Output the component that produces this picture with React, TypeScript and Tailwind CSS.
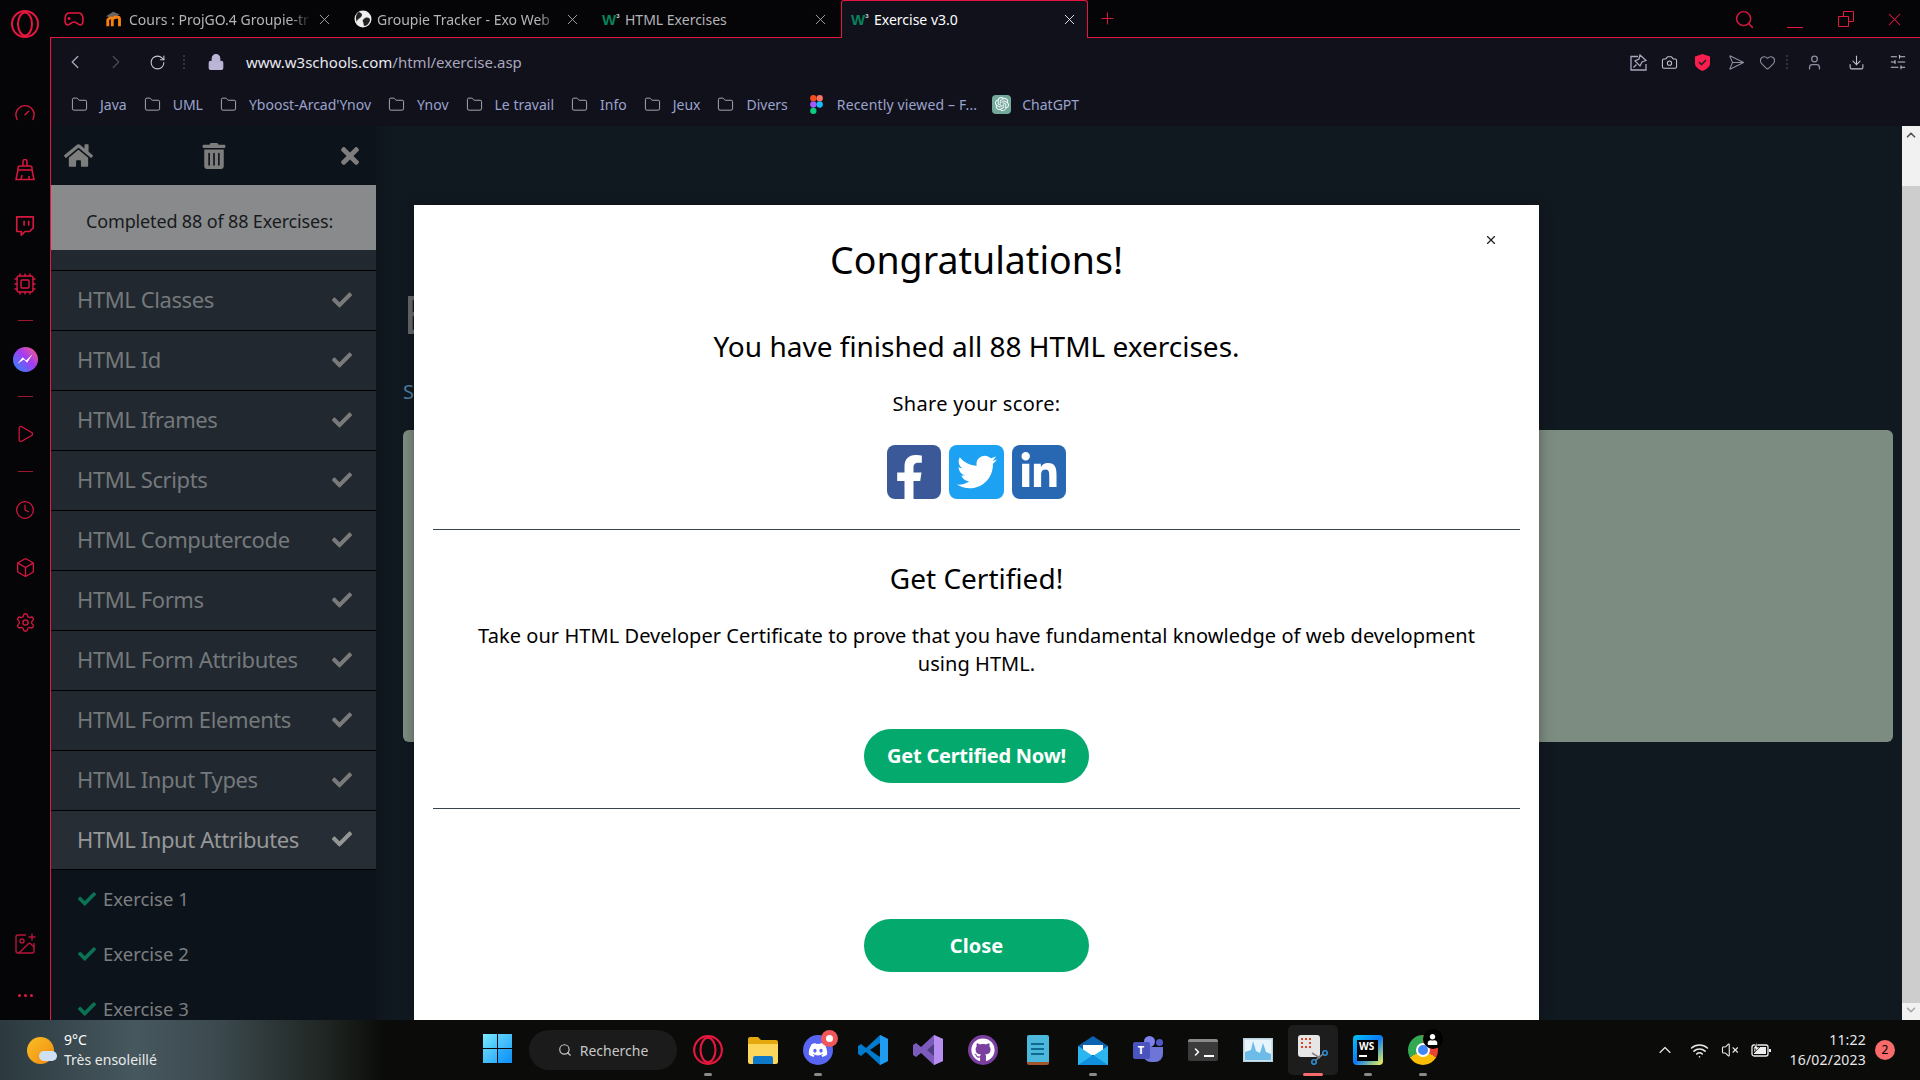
import React from 'react';
import {
  Gauge, Twitch, Cpu, Play, Clock, Box, Settings, ChevronLeft, ChevronRight, RotateCw, Lock,
  Folder, Search, X, Plus, Camera, Send, Heart, User, Download, SlidersHorizontal, Wifi, VolumeX,
  ChevronUp, ChevronDown, ImagePlus,
} from 'lucide-react';
import {
  FaHome, FaTrashAlt, FaTimes, FaCheck, FaFacebookF, FaTwitter, FaLinkedinIn, FaDiscord, FaGithub, FaUser,
} from 'react-icons/fa';
import { SiOpenai } from 'react-icons/si';

const RED = '#e5173f';

const topics = [
  'HTML Classes', 'HTML Id', 'HTML Iframes', 'HTML Scripts', 'HTML Computercode',
  'HTML Forms', 'HTML Form Attributes', 'HTML Form Elements', 'HTML Input Types',
];

const bookmarks = ['Java', 'UML', "Yboost-Arcad'Ynov", 'Ynov', 'Le travail', 'Info', 'Jeux', 'Divers'];

const OperaLogo = ({ size = 30 }: { size?: number }) => (
  <svg width={size} height={size} viewBox="0 0 30 30" fill="none" stroke="#e5173f" strokeWidth="2">
    <circle cx="15" cy="15" r="13" />
    <ellipse cx="15" cy="15" rx="7" ry="11.5" />
  </svg>
);

const W3 = () => (
  <span className="w-[18px] flex items-start font-['Liberation_Sans',sans-serif] font-bold text-[15px] leading-none text-[#07835a]">
    W<span className="text-[6px] leading-[8px] text-[#d8d8d8]">3</span>
  </span>
);

const Moodle = () => (
  <svg width="20" height="16" viewBox="0 0 20 16">
    <path d="M0 5 L8 0 L15 3 L7 7 Z" fill="#666" />
    <path d="M2 16V9c2-3 5-3 5 0v7M7 16V8c3-3 8-3 8 0v8" fill="none" stroke="#f98012" strokeWidth="3.2" />
  </svg>
);

const Globe = () => (
  <svg width="18" height="18" viewBox="0 0 18 18">
    <circle cx="9" cy="9" r="8.5" fill="#eee" />
    <path d="M5 2c3 1 4 3 2 5S3 9 3 12C1 8 2 4 5 2ZM11 8c3-1 5 0 5 2s-3 6-5 6-1-3-2-4 0-3 2-4Z" fill="#222" />
  </svg>
);

const Tab = ({ title, icon, active, fade }: { title: string; icon: React.ReactNode; active?: boolean; fade?: boolean }) => (
  <div
    className={
      active
        ? 'w-[247px] h-[39px] -mb-px flex items-center pl-[9px] pb-[2px] bg-[#11111b] border-x border-t border-[#e5173f] rounded-t-[3px] text-white'
        : 'w-[248px] h-[38px] flex items-center pl-[9px] text-[#b4b4b8]'
    }
  >
    <span className="w-[18px] flex justify-center shrink-0">{icon}</span>
    <span
      className={`ml-[5px] w-[183px] shrink-0 overflow-hidden whitespace-nowrap text-[14px] ${
        fade ? '[mask-image:linear-gradient(to_right,black_88%,transparent)]' : ''
      }`}
    >
      {title}
    </span>
    <X size={17} strokeWidth={1.2} className="ml-[4px] shrink-0" />
  </div>
);

const Rail = () => (
  <div className="w-[50px] shrink-0 bg-[#050508] flex flex-col items-center text-[#d8173f]">
    <div className="mt-[9px]"><OperaLogo /></div>
    <Gauge size={22} strokeWidth={1.5} className="mt-[63px]" />
    <svg className="mt-[35px]" width="22" height="22" viewBox="0 0 22 22" fill="none" stroke="currentColor" strokeWidth="1.5">
      <path d="M9 7V2.5a2 2 0 0 1 4 0V7" />
      <path d="M4 11V9a2 2 0 0 1 2-2h10a2 2 0 0 1 2 2v2Z" />
      <path d="M4 11 L2 20.5 H20 L18 11 M7 20.5 L8 16 M15 20.5 V17" />
    </svg>
    <Twitch size={22} strokeWidth={1.8} className="mt-[34px]" />
    <Cpu size={24} strokeWidth={1.4} className="mt-[35px]" />
    <div className="w-[15px] h-px bg-[#a01630] mt-[24px]" />
    <div className="mt-[26px] w-[25px] h-[25px] rounded-full bg-[linear-gradient(45deg,#1e90ff,#a33bf0_55%,#ff5f7e)] flex items-center justify-center">
      <svg width="17" height="11" viewBox="0 0 15 10"><path d="M0 9 L5 3 L8 6 L14 0 L9 8 L6 5 Z" fill="#fff" /></svg>
    </div>
    <div className="w-[15px] h-px bg-[#a01630] mt-[24px]" />
    <Play size={20} strokeWidth={1.5} className="mt-[27px]" />
    <div className="w-[15px] h-px bg-[#a01630] mt-[27px]" />
    <Clock size={20} strokeWidth={1.5} className="mt-[28px]" />
    <Box size={21} strokeWidth={1.5} className="mt-[37px]" />
    <Settings size={21} strokeWidth={1.5} className="mt-[34px]" />
    <ImagePlus size={24} strokeWidth={1.4} className="mt-[299px] text-[#b8143a]" />
    <div className="mt-[38px] flex gap-[3px]">
      <span className="w-[3px] h-[3px] rounded-full bg-[#e5173f]" />
      <span className="w-[3px] h-[3px] rounded-full bg-[#e5173f]" />
      <span className="w-[3px] h-[3px] rounded-full bg-[#e5173f]" />
    </div>
  </div>
);

const Toolbar = () => (
  <div className="h-[48px] shrink-0 flex items-center bg-[#11111b] text-[#a9a6bd] relative">
    <ChevronLeft size={22} strokeWidth={1.4} className="ml-[13px]" />
    <ChevronRight size={22} strokeWidth={1.4} className="ml-[19px] text-[#4a4a58]" />
    <RotateCw size={17} strokeWidth={1.5} className="ml-[22px] text-[#c9c7d6]" />
    <div className="ml-[17px] w-[2px] h-[14px] border-l-2 border-dotted border-[#33333f]" />
    <Lock size={18} fill="#bcb6d6" strokeWidth={1.6} className="ml-[22px] text-[#bcb6d6]" />
    <div className="ml-[21px] text-[15px] text-[#a9a6bd]">
      <span className="text-[#e8e8f0]">www.w3schools.com</span>/html/exercise.asp
    </div>
    <div className="ml-auto flex items-center text-[#8f8d9f]">
      <svg width="17" height="17" viewBox="0 0 17 17" fill="none" stroke="#a9a6bd" strokeWidth="1.3">
        <path d="M8 2.5H1v13.5h15v-6" />
        <path d="M10 1 L16 6.5 L12 8 L10 12 L5 7 L9 5 Z M6.5 10.5 L3.5 13.5" />
      </svg>
      <Camera size={17} strokeWidth={1.5} className="ml-[14px] text-[#c3c1d0]" />
      <svg className="ml-[17px]" width="15" height="17" viewBox="0 0 15 17">
        <path d="M7.5 0 L15 2.5 V10 C15 13 10 16 7.5 17 C5 16 0 13 0 10 V2.5 Z" fill="#fa1e4e" />
        <path d="M4 8 L6.5 10.5 L11 6" fill="none" stroke="#222" strokeWidth="1.6" />
      </svg>
      <Send size={17} strokeWidth={1.5} className="ml-[15px] rotate-45" />
      <Heart size={17} strokeWidth={1.5} className="ml-[17px]" />
      <div className="ml-[10px] w-[2px] h-[14px] border-l-2 border-dotted border-[#33333f]" />
      <User size={17} strokeWidth={1.8} className="ml-[18px]" />
      <Download size={17} strokeWidth={1.5} className="ml-[25px] text-[#c3c1d0]" />
      <SlidersHorizontal size={18} strokeWidth={1.4} className="ml-[24px] mr-[13px] text-[#c3c1d0]" />
    </div>
  </div>
);

const BookmarksBar = () => (
  <div className="h-[40px] shrink-0 flex items-center gap-[17px] pl-[20px] pb-[4px] bg-[#11111b] text-[14px] text-[#9aa3cd]">
    {bookmarks.map((name) => (
      <div key={name} className="flex items-center gap-[12px]">
        <Folder size={17} strokeWidth={1.1} className="text-[#d0d0d8]" />
        <span>{name}</span>
      </div>
    ))}
    <div className="flex items-center gap-[14px] ml-[5px]">
      <svg width="13" height="19" viewBox="0 0 12 18">
        <rect x="0" y="0" width="6" height="6" rx="3" fill="#f24e1e" />
        <rect x="6" y="0" width="6" height="6" rx="3" fill="#ff7262" />
        <rect x="0" y="6" width="6" height="6" rx="3" fill="#a259ff" />
        <circle cx="9" cy="9" r="3" fill="#1abcfe" />
        <rect x="0" y="12" width="6" height="6" rx="3" fill="#0acf83" />
      </svg>
      <span className="tracking-[0.15px]">Recently viewed – F...</span>
    </div>
    <div className="flex items-center gap-[11px] ml-[-2px]">
      <span className="w-[19px] h-[19px] rounded-[4px] bg-[#74aa9c] flex items-center justify-center">
        <SiOpenai size={14} className="text-white" />
      </span>
      <span>ChatGPT</span>
    </div>
  </div>
);

const LessonPanel = () => (
  <div className="w-[325px] shrink-0 bg-[#0d131a] overflow-hidden shadow-[4px_0_10px_rgba(0,0,0,0.25)]">
    <div className="h-[59px] flex items-center justify-between pl-[13px] pr-[14px] text-[#7d7d7d]">
      <FaHome size={29} />
      <FaTrashAlt size={26} className="mr-[3px]" />
      <FaTimes size={26} className="mr-[-1px]" />
    </div>
    <div className="h-[65px] bg-[#888a8c] flex items-center pl-[35px] pt-[7px] text-[18px] tracking-[-0.15px] text-[#181a1d]">
      Completed 88 of 88 Exercises:
    </div>
    <div className="h-[20px] bg-[#22282f]" />
    {topics.map((topic) => (
      <div key={topic} className="h-[60px] bg-[#22282f] border-t border-black flex items-center justify-between pl-[26px] pr-[24px] text-[22px] tracking-[-0.4px] text-[#74797c]">
        <span className="pb-[2px]">{topic}</span>
        <FaCheck size={20} className="text-[#7a7a7a] mb-[2px]" />
      </div>
    ))}
    <div className="h-[60px] bg-[#272d34] border-y border-black flex items-center justify-between pl-[26px] pr-[24px] text-[22px] tracking-[-0.4px] text-[#969899]">
      <span className="pb-[2px]">HTML Input Attributes</span>
      <FaCheck size={20} className="text-[#969696] mb-[2px]" />
    </div>
    <div className="pt-[1px]">
      {['Exercise 1', 'Exercise 2', 'Exercise 3'].map((name) => (
        <div key={name} className="h-[55px] flex items-center pl-[27px] text-[18.5px] text-[#7c7f81]">
          <FaCheck size={18} className="text-[#0a7353]" />
          <span className="ml-[7px]">{name}</span>
        </div>
      ))}
    </div>
  </div>
);

const Modal = () => (
  <div className="absolute left-[363px] top-[79px] bottom-0 w-[1125px] bg-white px-[19px] flex flex-col items-center text-center text-black shadow-[0_0_12px_rgba(0,0,0,0.35)]">
    <X size={14} strokeWidth={2} className="absolute right-[41px] top-[28px] text-[#222]" />
    <h2 className="mt-[25px] text-[37.5px] leading-[60px]">Congratulations!</h2>
    <p className="mt-[35px] text-[28px] leading-[42px]">You have finished all 88 HTML exercises.</p>
    <p className="mt-[22px] text-[20px] leading-[30px] tracking-[0.3px]">Share your score:</p>
    <div className="mt-[26px] flex gap-[8px]">
      <div className="w-[54px] h-[54px] rounded-[8px] bg-[#3b5998] flex items-end justify-end pr-[9px] overflow-hidden">
        <FaFacebookF size={46} className="text-white mb-[-2px]" />
      </div>
      <div className="w-[55px] h-[54px] rounded-[8px] bg-[#1da1f2] flex items-center justify-center">
        <FaTwitter size={40} className="text-white" />
      </div>
      <div className="w-[54px] h-[54px] rounded-[8px] bg-[#2867b2] flex items-center justify-center">
        <FaLinkedinIn size={40} className="text-white" />
      </div>
    </div>
    <div className="mt-[30px] w-full h-px bg-[#3a444c]" />
    <h3 className="mt-[26px] text-[28px] leading-[44px]">Get Certified!</h3>
    <p className="mt-[22px] w-[1020px] text-[20px] leading-[28px] tracking-[0.06px]">
      Take our HTML Developer Certificate to prove that you have fundamental knowledge of web development using HTML.
    </p>
    <button className="mt-[51px] w-[225px] h-[54px] rounded-[27px] bg-[#04aa6d] text-white text-[20px] tracking-[-0.25px] font-bold">
      Get Certified Now!
    </button>
    <div className="mt-[25px] w-full h-px bg-[#3a444c]" />
    <button className="mt-[110px] w-[225px] h-[53px] rounded-[27px] bg-[#04aa6d] text-white text-[20px] font-bold">
      Close
    </button>
  </div>
);

const Page = () => (
  <div className="flex-1 min-h-0 flex relative bg-[#111920] overflow-hidden">
    <LessonPanel />
    <div className="flex-1 min-w-0 pl-[27px] pr-[9px]">
      <h1 className="mt-[158px] text-[52px] leading-[60px] text-[#666a6d]">Exercise</h1>
      <p className="mt-[36px] text-[20px] leading-[24px] text-[#4f7ea3]">Score</p>
      <div className="mt-[26px] h-[312px] rounded-[6px] bg-[#7d8c80]" />
    </div>
    <div className="w-[18px] shrink-0 bg-[#cdcdcd] flex flex-col justify-between">
      <div className="h-[60px] bg-[#f1f1f1] flex justify-center pt-[2px]"><ChevronUp size={14} strokeWidth={3} className="text-[#555]" /></div>
      <div className="h-[17px] bg-[#f1f1f1] flex justify-center"><ChevronDown size={14} strokeWidth={3} className="text-[#aaa]" /></div>
    </div>
    <Modal />
  </div>
);

const TaskIcon = ({ children, mark, active }: { children: React.ReactNode; mark?: boolean; active?: boolean }) => (
  <div className={`w-[50px] h-[50px] mx-[2.5px] flex flex-col items-center justify-center relative rounded-[5px] ${active ? 'bg-[#1c1d1c]' : ''}`}>
    {children}
    {mark && <span className="absolute bottom-[-1px] w-[8px] h-[3px] rounded-full bg-[#8a8a8a]" />}
    {active && <span className="absolute bottom-[-1px] w-[20px] h-[3px] rounded-full bg-[#f76b6b]" />}
  </div>
);

const Taskbar = () => (
  <div className="h-[60px] shrink-0 flex items-center relative bg-[linear-gradient(90deg,#2c3a3f_0%,#46575e_7%,#3d4b50_11%,#1f2522_17%,#0b0c0a_20%)]">
    <div className="w-[27px] h-[27px] ml-[27px] rounded-full bg-[linear-gradient(135deg,#fbbf24,#f08a12)] shrink-0 relative">
      <span className="absolute right-[-3px] bottom-[3px] w-[18px] h-[10px] rounded-full bg-[#cfe0f5]" />
    </div>
    <div className="ml-[10px] text-[14px] leading-[20px] text-[#e8eaea] w-[200px]">
      <div className="text-white">9°C</div>
      <div>Très ensoleillé</div>
    </div>
    <div className="absolute left-[483px] top-[14px] w-[29px] h-[29px] grid grid-cols-2 gap-[1px]">
      <span className="bg-[linear-gradient(135deg,#7fe9ff,#3fc3fb)]" />
      <span className="bg-[linear-gradient(135deg,#5fd0fd,#2fb0fb)]" />
      <span className="bg-[linear-gradient(135deg,#5fd0fd,#2fb0fb)]" />
      <span className="bg-[linear-gradient(135deg,#2fb0fb,#0f90f8)]" />
    </div>
    <div className="absolute left-[529px] top-[10px] w-[148px] h-[40px] rounded-full bg-[#1a1b1a] flex items-center justify-center gap-[8px] text-[14px] text-[#c8c8c8]">
      <Search size={14} strokeWidth={2} />
      <span>Recherche</span>
    </div>
    <div className="absolute left-[680px] top-[5px] flex">
      <TaskIcon mark><OperaLogo size={32} /></TaskIcon>
      <TaskIcon>
        <svg width="30" height="28" viewBox="0 0 30 28">
          <path d="M0 3a2 2 0 0 1 2-2h8l3 3h15a2 2 0 0 1 2 2v20H0Z" fill="#e3a90e" />
          <path d="M0 8h30v18a2 2 0 0 1-2 2H2a2 2 0 0 1-2-2Z" fill="#fdd75c" />
          <path d="M5 28v-6a2 2 0 0 1 2-2h16a2 2 0 0 1 2 2v6Z" fill="#0f78c8" />
        </svg>
      </TaskIcon>
      <TaskIcon mark>
        <div className="w-[30px] h-[30px] rounded-full bg-[#5865f2] flex items-center justify-center relative">
          <FaDiscord size={20} className="text-white" />
          <span className="absolute right-[-5px] top-[-5px] w-[17px] h-[17px] rounded-full bg-[#f0575a] flex items-center justify-center">
            <span className="w-[7px] h-[7px] rounded-full bg-white" />
          </span>
        </div>
      </TaskIcon>
      <TaskIcon>
        <svg width="30" height="30" viewBox="0 0 30 30">
          <path d="M22 0 L30 4 V26 L22 30 L8 17 L3 21 L0 19 V11 L3 9 L8 13 Z" fill="#007acc" />
          <path d="M22 0 L30 4 V26 L22 30 Z" fill="#1f9cf0" />
          <path d="M22 8 L12 15 L22 22 Z" fill="#0b0c0a" />
        </svg>
      </TaskIcon>
      <TaskIcon>
        <svg width="30" height="30" viewBox="0 0 30 30">
          <path d="M21 0 L30 4 V26 L21 30 L8 18 L3 22 L0 20 V10 L3 8 L8 12 Z" fill="#7c5bbd" />
          <path d="M21 0 L30 4 V26 L21 30 Z" fill="#b88ef0" />
          <path d="M21 9 L14 15 L21 21 Z" fill="#4e3d80" />
        </svg>
      </TaskIcon>
      <TaskIcon>
        <div className="w-[30px] h-[30px] rounded-full bg-[#7b3fa0] flex items-center justify-center">
          <FaGithub size={24} className="text-white" />
        </div>
      </TaskIcon>
      <TaskIcon>
        <div className="w-[22px] h-[30px] bg-[#4cb8dc] rounded-[2px] border-b-[3px] border-[#a4562a] flex flex-col items-center justify-center gap-[3px]">
          <span className="w-[13px] h-[2px] bg-[#0f6a92]" />
          <span className="w-[13px] h-[2px] bg-[#0f6a92]" />
          <span className="w-[13px] h-[2px] bg-[#0f6a92]" />
        </div>
      </TaskIcon>
      <TaskIcon mark>
        <svg width="30" height="29" viewBox="0 0 30 29">
          <path d="M0 10 L15 0 L30 10 V14 H0 Z" fill="#0a62b0" />
          <path d="M5 9h20v10H5Z" fill="#fff" />
          <path d="M0 10 L15 20 L30 10 V29 H0 Z" fill="#2bb6f0" />
          <path d="M0 29 L15 19 L30 29 Z" fill="#0f8fdc" />
        </svg>
      </TaskIcon>
      <TaskIcon>
        <div className="relative w-[30px] h-[28px]">
          <span className="absolute left-[11px] top-[0px] w-[11px] h-[11px] rounded-full bg-[#7b83eb]" />
          <span className="absolute right-[0px] top-[3px] w-[7px] h-[7px] rounded-full bg-[#5059c9]" />
          <span className="absolute left-[10px] top-[11px] w-[20px] h-[15px] rounded-b-[8px] bg-[#6d75d6]" />
          <span className="absolute left-0 top-[6px] w-[17px] h-[17px] rounded-[2px] bg-[#4b53bc] flex items-center justify-center text-white text-[11px] font-bold">T</span>
        </div>
      </TaskIcon>
      <TaskIcon>
        <div className="w-[30px] h-[22px] rounded-[2px] bg-[#3b3b3b] border-t-[3px] border-[#8a8a8a] flex items-center pl-[3px] gap-[1px]">
          <ChevronRight size={12} strokeWidth={3} className="text-white" />
          <span className="w-[10px] h-[2px] mt-[8px] bg-white" />
        </div>
      </TaskIcon>
      <TaskIcon>
        <svg width="30" height="24" viewBox="0 0 30 24">
          <rect width="30" height="24" fill="#b8d2de" />
          <rect x="1.5" y="1.5" width="27" height="21" fill="#e8f4fb" />
          <path d="M2 22 V14 L8 12 L10 3 L13 13 L17 15 L20 5 L23 14 L28 16 V22 Z" fill="#6cbbe8" />
        </svg>
      </TaskIcon>
      <TaskIcon active>
        <div className="relative w-[30px] h-[30px]">
          <div className="w-[22px] h-[22px] rounded-[3px] bg-[#e6e6e6] flex items-start p-[3px]">
            <span className="w-[10px] h-[10px] border-2 border-dotted border-[#d9482b]" />
          </div>
          <svg className="absolute left-[13px] top-[13px]" width="17" height="17" viewBox="0 0 17 17" fill="none" stroke="#2a8fd8" strokeWidth="1.6">
            <circle cx="14" cy="5" r="2.2" />
            <circle cx="3" cy="14" r="2.2" />
            <path d="M12 6 L5 12 M1 5 L9 10" stroke="#888" />
          </svg>
        </div>
      </TaskIcon>
      <TaskIcon mark>
        <div className="w-[30px] h-[30px] rounded-[4px] bg-[linear-gradient(135deg,#07c3f2,#087cfa_50%,#fcf84a)] flex items-center justify-center">
          <div className="w-[21px] h-[21px] bg-black text-white text-[10px] font-bold leading-[12px] pl-[2px]">
            WS
            <div className="w-[8px] h-[2px] mt-[3px] bg-white" />
          </div>
        </div>
      </TaskIcon>
      <TaskIcon mark>
        <div className="relative w-[30px] h-[30px] rounded-full bg-[conic-gradient(#ea4335_0deg_120deg,#fbbc05_120deg_240deg,#34a853_240deg_360deg)] flex items-center justify-center">
          <span className="w-[14px] h-[14px] rounded-full bg-[#4285f4] border-2 border-white" />
          <span className="absolute right-[-5px] top-[-6px] w-[20px] h-[20px] rounded-full bg-black flex items-center justify-center">
            <FaUser size={11} className="text-white" />
          </span>
        </div>
      </TaskIcon>
    </div>
    <div className="ml-auto flex items-center text-[#e8e8e8]">
      <ChevronUp size={20} strokeWidth={1.4} />
      <Wifi size={19} strokeWidth={2} className="ml-[15px]" />
      <VolumeX size={18} strokeWidth={1.5} className="ml-[12px]" />
      <svg className="ml-[12px]" width="20" height="16" viewBox="0 0 20 16">
        <rect x="1" y="3" width="16" height="11" rx="2" fill="none" stroke="#eee" strokeWidth="1.3" />
        <rect x="3" y="5" width="12" height="7" fill="#eee" />
        <rect x="18" y="7" width="2" height="3" fill="#eee" />
        <path d="M6 0 L2 7 H5 L3 11 L9 5 H6 Z" fill="#eee" stroke="#0b0c0a" strokeWidth="0.7" />
      </svg>
      <div className="ml-[10px] text-right text-[14px] leading-[20px] tracking-[0.2px] w-[85px]">
        <div>11:22</div>
        <div>16/02/2023</div>
      </div>
      <span className="ml-[9px] mr-[25px] w-[20px] h-[20px] rounded-full bg-[#f76b6b] flex items-center justify-center text-[12px] text-black">2</span>
    </div>
  </div>
);

export default function App() {
  return (
    <div className="w-[1920px] h-[1080px] overflow-hidden flex flex-col font-['Noto_Sans',sans-serif]">
      <div className="flex-1 min-h-0 flex">
        <Rail />
        <div className="flex-1 min-w-0 flex flex-col">
          <div className="h-[38px] shrink-0 flex items-start bg-[#050508] border-b border-[#e5173f] relative">
            <div className="w-[47px] h-[38px] flex items-center justify-center">
              <svg width="20" height="16" viewBox="0 0 20 16" fill="none" stroke={RED} strokeWidth="1.6">
                <path d="M5 2h10c3 0 4 3 4 7s-1 5-3 5-3-3-6-3-4 3-6 3-3-1-3-5 1-7 4-7Z" />
                <path d="M5 6v3M3.5 7.5h3M14 7h.1M16 8h.1" />
              </svg>
            </div>
            <Tab title="Cours : ProjGO.4 Groupie-tr" icon={<Moodle />} fade />
            <Tab title="Groupie Tracker - Exo Web" icon={<Globe />} fade />
            <Tab title="HTML Exercises" icon={<W3 />} />
            <Tab title="Exercise v3.0" icon={<W3 />} active />
            <Plus size={19} strokeWidth={1.2} className="ml-[10px] mt-[9px] text-[#e5173f]" />
            <div className="ml-auto flex items-center h-[38px] text-[#e5173f]">
              <Search size={21} strokeWidth={1.7} className="text-[#d8173f]" />
              <span className="ml-[32px] mt-[16px] w-[16px] h-px bg-[#e5173f]" />
              <svg className="ml-[35px]" width="16" height="16" viewBox="0 0 16 16" fill="none" stroke="#e5173f">
                <path d="M.5 5.5h10v10H.5Z M5.5 5V.5h10v10H11" />
              </svg>
              <X size={21} strokeWidth={1.2} className="ml-[30px] mr-[15px]" />
            </div>
          </div>
          <div className="flex-1 min-h-0 flex flex-col border-l border-[#e5173f]">
            <Toolbar />
            <BookmarksBar />
            <Page />
          </div>
        </div>
      </div>
      <Taskbar />
    </div>
  );
}
